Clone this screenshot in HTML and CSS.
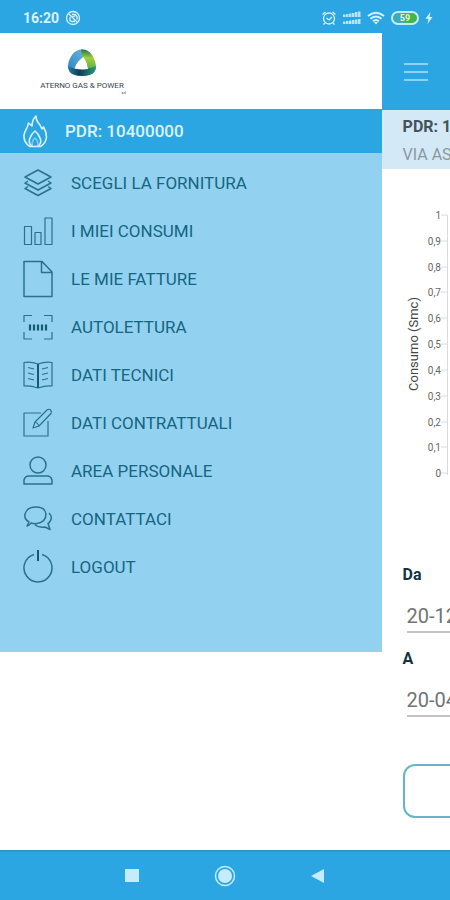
FILE: index.html
```html
<!DOCTYPE html>
<html lang="it">
<head>
<meta charset="utf-8">
<meta name="viewport" content="width=device-width, initial-scale=1">
<title>Aterno Gas &amp; Power</title>
<link rel="stylesheet" href="styles.css">
</head>
<body>
<div class="app">
  <header class="status">
    <div class="status-group">
      <span class="clock">16:20</span>
      <svg width="16" height="16" viewBox="0 0 16 16" fill="none" stroke="currentColor" stroke-width="1.3"><circle cx="8" cy="8" r="6.5"/><path d="M3.5 3.5l9 9M5 7v3.500l2 1h3M7 4.500h3l2 2v3M7 7l3-1"/></svg>
    </div>
    <div class="status-group">
      <svg width="16" height="16" viewBox="0 0 16 16" fill="none" stroke="currentColor" stroke-width="1.3"><circle cx="8" cy="8.500" r="5.500"/><path d="M1.500 4.500l3-2.500M14.500 4.500l-3-2.500M5.500 8l2.500 2 3-3M4 13l-1.500 1.500M12 13l1.500 1.500"/></svg>
      <svg width="18" height="16" viewBox="0 0 18 16" fill="currentColor"><path d="M0 4.500h2.500V7H0zM3 4h2.500v3H3zM6 3.500h2.500V7H6zM9 3h2.500v4H9zM12 2h2.500v5H12zM15 1.500h2.500V7H15zM0 11.500h2.500V14H0zM3 11h2.500v3H3zM6 10.500h2.500V14H6zM9 10h2.500v4H9zM12 9.500h2.500V14H12zM15 9h2.500v5H15z" opacity=".8"/></svg>
      <svg width="18" height="16" viewBox="0 0 18 16" fill="none" stroke="currentColor" stroke-width="2"><path d="M1 6q8-6.500 16 0M3.500 8.700q5.500-4.500 11 0M6 11.200q3-2.500 6 0"/><path d="M7 12h4l-2 2.500z" fill="currentColor" stroke="none"/></svg>
      <span class="battery">59</span>
      <svg width="8" height="14" viewBox="0 0 8 14" fill="currentColor"><path d="M5.500 1L.5 7.800h3L2.500 13l5-7h-3z"/></svg>
    </div>
  </header>

  <div class="stage">
    <aside class="drawer">
      <div class="brand">
        <svg width="30" height="28" viewBox="0 0 30 28">
          <defs>
            <linearGradient id="left" x1="0" y1="1" x2="1" y2="0"><stop offset="0" stop-color="#2b83bd"/><stop offset="1" stop-color="#65b5e3"/></linearGradient>
            <linearGradient id="right" x1="0" y1="0" x2="0" y2="1"><stop offset="0" stop-color="#1e7658"/><stop offset=".35" stop-color="#a5cf3c"/><stop offset="1" stop-color="#3c9f52"/></linearGradient>
            <linearGradient id="base"><stop offset="0" stop-color="#2a78a5"/><stop offset=".4" stop-color="#0b3d57"/><stop offset="1" stop-color="#2c9a78"/></linearGradient>
          </defs>
          <path d="M16 0.500Q9 0 5 6T1 17q0 5 4 8l4-6 8-10z" fill="url(#left)"/>
          <path d="M14 0.600q7-1 11 5.400t4 12q0 4-4 7l-6-5-4-13z" fill="url(#right)"/>
          <path d="M1 17q4 3 14 3 8 0 14-3 0 6-5 8.500-9 3-18 0-4.500-2.500-5-8.500z" fill="url(#base)"/>
          <path d="M16.500 8Q10 12 7.500 19.500q7 1.500 13.500.5Q20 13 16.500 8z" fill="#fff"/>
        </svg>
        <span class="brand-name">ATERNO GAS &amp; POWER</span>
        <span class="brand-suffix">srl</span>
      </div>
      <div class="supply">
        <svg width="26" height="36" viewBox="0 0 26 36" fill="none" stroke="currentColor" stroke-width="1.600" stroke-linejoin="round"><path d="M8 33.500C4 31 1.500 27 2 22c.3-4 4-7 4.500-12l3.500 3q0-6 4-10 0 5 4 9l2 4 1.500-2q3 5 3 10-.5 6-6 9.500z"/><path d="M9.500 33q-4-4-1-9 1-3 4.500-6 3.500 3 4.500 6 3 5-1 9"/><path d="M10.500 33q-1.500-4 2.500-8 4 4 2.500 8" opacity=".5"/></svg>
        <span>PDR: 10400000</span>
      </div>
      <nav class="menu">
        <a href="#fornitura"><svg viewBox="0 0 30 38"><path d="M15 6l13 7-13 7-13-7zM5 17l-3 2 13 7 13-7-3-2M5 22.500l-3 2 13 7 13-7-3-2"/></svg>SCEGLI LA FORNITURA</a>
        <a href="#consumi"><svg class="thin" viewBox="0 0 30 38"><path d="M1.500 14.500h7v18h-7zM12 20.500h6v12h-6zM22 6h7v26.500h-7z"/></svg>I MIEI CONSUMI</a>
        <a href="#fatture"><svg viewBox="0 0 30 38"><path d="M1 1.500h18L29 12v24.500H1zM18.500 2v10.500H29"/></svg>LE MIE FATTURE</a>
        <a href="#autolettura"><svg class="thin" viewBox="0 0 30 38"><path d="M1 14V7.500h8M21 7.500h8V14M29 24v7h-8M9 31H1v-7"/><path class="bars" d="M7 16.500v6M11 16.500v6M15 16.500v6M19 16.500v6M23 16.500v6"/></svg>AUTOLETTURA</a>
        <a href="#tecnici"><svg class="thin" viewBox="0 0 30 38"><path d="M15 8Q8 5.500 1 6.500V30q7-.5 14 2 7-2.500 14-2V6.500Q22 5.500 15 8zM5 11.500l6 1.500M5 17l6 1.500M5 22.500l6 1.500M25 11.500L19 13M25 17l-6 1.500M25 22.500L19 24"/><path class="spine" d="M15 8v24"/></svg>DATI TECNICI</a>
        <a href="#contrattuali"><svg class="thin" viewBox="0 0 30 38"><path d="M18 9H1v23h24V17M10 24l2-6L24 6q2-1.500 3.500 0t.5 3.500L16 22zM12 18q3 1 4 4"/></svg>DATI CONTRATTUALI</a>
        <a href="#personale"><svg viewBox="0 0 30 38"><circle cx="15" cy="13" r="8"/><path d="M1 32v-4q1-4 5-4h18q4 0 5 4v4z"/></svg>AREA PERSONALE</a>
        <a href="#contattaci"><svg viewBox="0 0 30 38"><path d="M4 26l2-4q-5-3-4-8 2-7 11-7t10 7q0 8-9 9.500-3 .5-6-.5-1 2-4 3zM26 13q4 4 1 8.500-1 1.500-2 2l2 6-5-2.500q-6 1-10-2"/></svg>CONTATTACI</a>
        <a href="#logout"><svg viewBox="0 0 30 38"><path d="M11 6.500a14 14 0 1 0 8 0"/><path class="spine" d="M15 2v11"/></svg>LOGOUT</a>
      </nav>
    </aside>

    <main class="page">
      <div class="toolbar">
        <button class="burger" type="button" aria-label="Menu"><svg width="24" height="20" viewBox="0 0 24 20" stroke="currentColor" stroke-width="1.500"><path d="M0 2h24M0 10h24M0 18h24"/></svg></button>
      </div>
      <div class="point">
        <strong>PDR: 10400000</strong>
        <span>VIA AS</span>
      </div>
      <svg class="chart" width="408" height="282" viewBox="0 0 408 282" role="img" aria-label="Consumo (Smc)">
        <path class="axis" d="M44.500 10v260M38 10h6M38 36h6M38 62h6M38 87h6M38 113h6M38 139h6M38 165h6M38 191h6M38 217h6M38 242h6M38 268h6"/>
        <text class="axis-title" transform="translate(15 139) rotate(-90)" text-anchor="middle">Consumo (Smc)</text>
        <g class="ticks" text-anchor="end">
          <text x="38" y="14">1</text><text x="38" y="40">0,9</text><text x="38" y="66">0,8</text><text x="38" y="91">0,7</text><text x="38" y="117">0,6</text><text x="38" y="143">0,5</text><text x="38" y="169">0,4</text><text x="38" y="195">0,3</text><text x="38" y="221">0,2</text><text x="38" y="246">0,1</text><text x="38" y="272">0</text>
        </g>
      </svg>
      <form class="range">
        <label for="from">Da</label>
        <input id="from" type="text" value="20-12-2019">
        <label for="to">A</label>
        <input id="to" type="text" value="20-04-2020">
        <button class="submit" type="button" aria-label="Cerca"></button>
      </form>
    </main>
  </div>

  <footer class="navbar">
    <button type="button" aria-label="Recenti"><svg width="14" height="14" viewBox="0 0 14 14"><path d="M0 0h14v13H0z" fill="currentColor"/></svg></button>
    <button type="button" aria-label="Home"><svg width="22" height="22" viewBox="0 0 22 22"><circle cx="11" cy="11" r="9.500" fill="none" stroke="currentColor" stroke-width="1.500"/><circle cx="11" cy="11" r="7" fill="currentColor"/></svg></button>
    <button type="button" aria-label="Indietro"><svg width="14" height="14" viewBox="0 0 14 14"><path d="M13 0v14L0 7z" fill="currentColor"/></svg></button>
  </footer>
</div>
</body>
</html>
```
FILE: styles.css
```css
* {
  box-sizing: border-box;
}

body {
  margin: 0;
  font-family: Roboto, "Liberation Sans", sans-serif;
  font-size: 16px;
  background: #fff;
}

svg {
  display: block;
  flex: none;
}

button {
  border: 0;
  padding: 0;
  background: none;
  color: inherit;
  font: inherit;
}

.app {
  display: flex;
  flex-direction: column;
  min-height: 100vh;
  overflow: hidden;
}

.status {
  display: flex;
  justify-content: space-between;
  align-items: center;
  height: 33px;
  padding: 3px 17px 0 23px;
  background: #2ca6e3;
  color: #d9f4ff;
}

.status-group {
  display: flex;
  align-items: center;
  gap: 6px;
}

.clock {
  font-size: 14px;
  font-weight: 700;
}

.battery {
  width: 28px;
  height: 14px;
  border: 2px solid #c4ecfc;
  border-radius: 7px;
  background: linear-gradient(90deg, #3fa9c4 0 50%, #43b649 50%);
  color: #eaf7b8;
  font-size: 9px;
  font-weight: 700;
  line-height: 10px;
  text-align: center;
}

.stage {
  display: grid;
  grid-template-columns: 84.8% 15.2%;
  flex: 1;
}

.brand {
  display: flex;
  flex-direction: column;
  align-items: center;
  width: 164px;
  height: 76px;
  padding-top: 16px;
  color: #36454f;
}

.brand-name {
  margin-top: 4px;
  font-size: 8px;
  line-height: 10px;
  white-space: nowrap;
}

.brand-suffix {
  align-self: flex-end;
  padding-right: 38px;
  font-size: 4px;
  line-height: 4px;
}

.supply {
  display: flex;
  align-items: center;
  gap: 17px;
  height: 44px;
  padding-left: 22px;
  background: #2ca6e3;
  color: #d9f4ff;
  font-size: 17px;
  font-weight: 500;
}

.menu {
  display: flex;
  flex-direction: column;
  padding: 6px 0 61px;
  background: #92d2f0;
}

.menu a {
  display: flex;
  align-items: center;
  gap: 18px;
  height: 48px;
  padding-left: 23px;
  color: #176581;
  font-size: 17px;
  text-decoration: none;
}

.menu svg {
  width: 30px;
  height: 38px;
  fill: none;
  stroke: #2b718d;
  stroke-width: 1.5;
  stroke-linejoin: round;
}

.menu .thin {
  stroke-width: 1.2;
}

.menu .bars {
  stroke: #155a73;
  stroke-width: 2.2;
}

.menu .spine {
  stroke: #155a73;
  stroke-width: 2;
}

.page {
  min-width: 0;
  overflow: hidden;
}

.toolbar {
  display: flex;
  align-items: center;
  height: 77px;
  padding-left: 22px;
  background: #2ca6e3;
  color: #a9e2f8;
}

.point {
  display: flex;
  flex-direction: column;
  height: 59px;
  padding: 3px 0 0 21px;
  background: #d3e9f6;
  color: #8b98a1;
  line-height: 28px;
  white-space: nowrap;
}

.point strong {
  color: #46525b;
}

.chart {
  margin: 36px 0 0 21px;
}

.axis {
  fill: none;
  stroke: #d9dcde;
}

.axis-title {
  font-size: 13px;
  fill: #444;
}

.ticks {
  font-size: 10px;
  fill: #666;
}

.range {
  display: flex;
  flex-direction: column;
  width: 408px;
  padding: 78px 0 30px 21px;
}

.range label {
  color: #12343f;
  font-weight: 700;
  line-height: 20px;
}

.range input {
  height: 32px;
  margin: 16px 0 16px 4px;
  border: 0;
  border-bottom: 2px solid #c4c4c4;
  padding: 0;
  background: none;
  color: #707476;
  font: inherit;
  font-size: 20px;
}

.range .submit {
  height: 54px;
  margin-top: 31px;
  border: 2px solid #67b5c8;
  border-radius: 12px;
}

.navbar {
  display: flex;
  justify-content: center;
  align-items: center;
  gap: 75px;
  height: 50px;
  border-top: 2px solid #2a9cc4;
  background: #2ca6e3;
  color: #c4ecfc;
}
```
